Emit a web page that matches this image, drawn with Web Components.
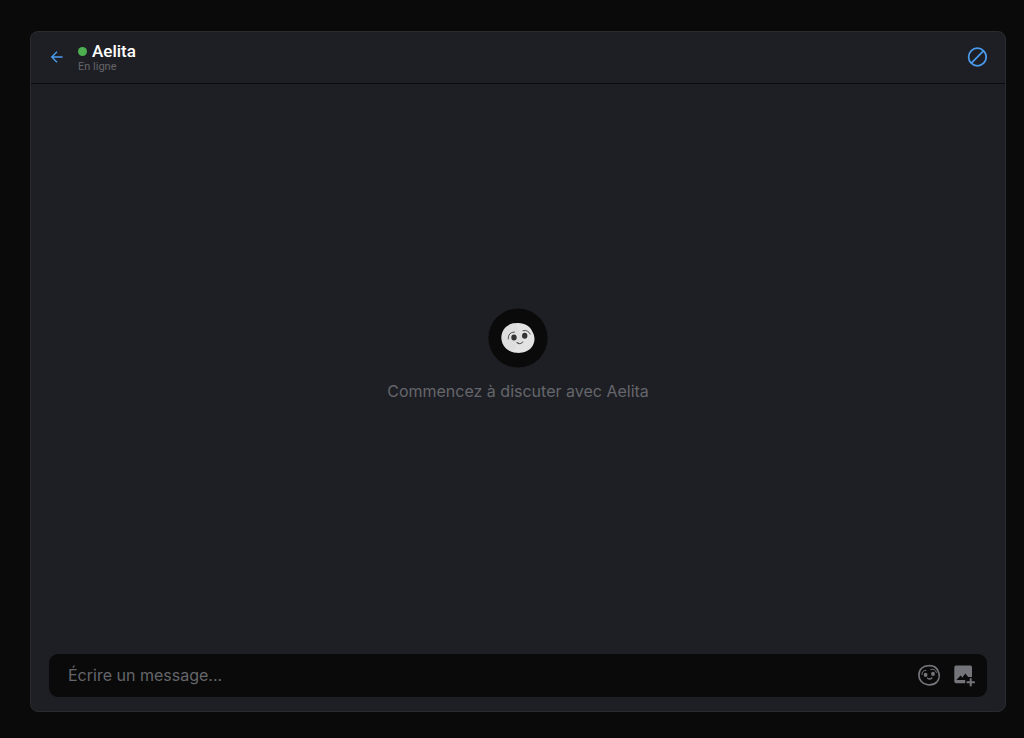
<!DOCTYPE html>
<html lang="fr">
<head>
<meta charset="utf-8">
<title>Aelita</title>
<style>
  html { height: 100%; }
  body { margin: 0; height: 100%; background: #0a0a0a; color: #fff; font-family: Inter, "Liberation Sans", sans-serif; }
</style>
</head>
<body>
<chat-window>
  <chat-header slot="header" status="En ligne">Aelita</chat-header>
  <chat-empty>Commencez à discuter avec Aelita</chat-empty>
  <chat-composer slot="footer"></chat-composer>
</chat-window>
<script>
  function define(name, markup, setup) {
    const template = document.createElement('template');
    template.innerHTML = markup;
    customElements.define(name, class extends HTMLElement {
      constructor() {
        super();
        this.attachShadow({ mode: 'open' }).append(template.content.cloneNode(true));
      }
      connectedCallback() { if (setup) setup(this); }
    });
  }

  define('chat-window', `
    <style>
      :host { display: flex; box-sizing: border-box; min-height: 100%; padding: 31px 18px 26px 30px; }
      section { flex: 1; display: flex; flex-direction: column; min-width: 0; background: #1e1f24; border: 1px solid #2a2b2f; border-radius: 8px; box-sizing: border-box; }
      main { flex: 1; display: grid; place-items: center; padding-bottom: 30px; }
    </style>
    <section>
      <slot name="header"></slot>
      <main><slot></slot></main>
      <slot name="footer"></slot>
    </section>`);

  define('icon-button', `
    <style>
      :host { display: block; flex: none; }
      button { display: block; margin: 0; padding: 0; border: 0; background: none; color: inherit; cursor: pointer; }
    </style>
    <button type="button"><slot></slot></button>`,
    el => el.shadowRoot.querySelector('button').setAttribute('aria-label', el.getAttribute('label')));

  define('chat-header', `
    <style>
      :host { display: flex; align-items: center; box-sizing: border-box; height: 52px; padding: 0 18px 1px; border-bottom: 1px solid #0a0a0a; font-family: Roboto, sans-serif; color: #fff; }
      icon-button { color: #4a9cf0; }
      svg { display: block; }
      .who { flex: 1; padding-left: 13px; }
      h1 { display: flex; align-items: center; gap: 5px; margin: 0; font-size: 17px; line-height: 20px; font-weight: 500; }
      h1::before { content: ""; width: 9px; height: 9px; border-radius: 50%; background: #4caf50; }
      p { margin: 0; font-size: 11px; line-height: 12px; color: #65666b; }
    </style>
    <icon-button label="Retour">
      <svg width="16" height="16" viewBox="0 0 16 16" fill="none" stroke="currentColor" stroke-width="1.4"><path d="M13.6 8H3M8 2.8 2.8 8 8 13.2"/></svg>
    </icon-button>
    <div class="who"><h1><slot></slot></h1><p></p></div>
    <icon-button label="Bloquer">
      <svg width="20" height="20" viewBox="0 0 20 20" fill="none" stroke="currentColor" stroke-width="1.7"><circle cx="10.4" cy="10" r="8.8"/><path d="M4.1 16.3 16.7 3.7"/></svg>
    </icon-button>`,
    el => { el.shadowRoot.querySelector('p').textContent = el.getAttribute('status'); });

  define('chat-empty', `
    <style>
      :host { display: flex; flex-direction: column; align-items: center; gap: 13px; color: #65666b; }
      svg { display: block; }
      p { margin: 0; font-size: 16px; line-height: 20px; }
    </style>
    <svg width="60" height="60" viewBox="0 0 60 60" aria-hidden="true">
      <circle cx="30" cy="30" r="29.6" fill="#0a0a0a"/>
      <path d="M13.5 29C14 20 20.5 15 29.5 15C37 14.8 42.5 18.5 44.5 24C47 28 47.3 33.5 44.5 38C41 43.5 35 45.3 28 44.8C19 44 13.2 37 13.5 29Z" fill="#e3e3e3"/>
      <path d="M13.5 29C14 21 20 16 27 15L35 30L24 43.7C17 41 13.2 36 13.5 29Z" fill="#d9d9d9" opacity=".5"/>
      <g fill="#333"><ellipse cx="26" cy="29.5" rx="2.7" ry="3"/><ellipse cx="36.7" cy="27.8" rx="2.7" ry="3"/></g>
      <g fill="none" stroke="#555" stroke-linecap="round"><path d="M20.2 31Q20 24 26.5 24M35 22.7Q40 21.5 42.2 26"/><path d="M29 34.5Q32 37.2 34.8 34" stroke-width="1.1"/></g>
    </svg>
    <p><slot></slot></p>`);

  define('chat-composer', `
    <style>
      :host { display: block; padding: 0 18px 14px; }
      form { display: flex; align-items: center; box-sizing: border-box; height: 43px; margin: 0; padding: 0 11px 1px 19px; background: #0a0a0a; border-radius: 9px; color: #74747b; }
      input { flex: 1; min-width: 0; height: 24px; margin: 0; padding: 0; border: 0; outline: 0; background: none; color: #fff; font: 16px/24px Inter, sans-serif; }
      input::placeholder { color: #65666b; opacity: 1; }
      .tools { display: flex; align-items: center; gap: 11px; }
      svg { display: block; }
    </style>
    <form>
      <input type="text" aria-label="Message" placeholder="Écrire un message...">
      <div class="tools">
        <icon-button label="Émoticônes">
          <svg width="24" height="24" viewBox="0 0 24 24" fill="none" stroke="currentColor" stroke-linecap="round"><path stroke-width="1.7" d="M1.9 12C2 6 6.2 2.7 12 2.6C16.5 2.4 19.8 4.6 21.2 8.3C22.8 11.5 22.4 16 20 18.8C17.5 21.5 14 22.1 10.5 21.7C5.5 21 1.8 17 1.9 12Z"/><path d="M4.9 11.5Q5 7.4 8.8 7.3M13.8 6.4Q17.8 5.2 19.4 9.4"/><path stroke-width="1.4" d="M10.6 15.3Q12.8 17 14.8 15"/><g fill="currentColor" stroke="none"><ellipse cx="8.6" cy="11.9" rx="1.9" ry="2.1"/><ellipse cx="16" cy="10.9" rx="1.9" ry="2.1"/></g></svg>
        </icon-button>
        <icon-button label="Ajouter une image">
          <svg width="24" height="24" viewBox="0 0 24 24" fill="currentColor"><path fill-rule="evenodd" d="M4 2.5H18.3Q20 2.5 20 4.2V14H16.2V17H13.2V20.2H4Q2.3 20.2 2.3 18.5V4.2Q2.3 2.5 4 2.5ZM4.4 16.9H13.2V17H16.2V14L13.3 10.6L10.4 14.6L8.6 12.4Z"/><path d="M17.7 15.2H19.7V18.2H22.8V20.2H19.7V23.3H17.7V20.2H14.6V18.2H17.7Z"/></svg>
        </icon-button>
      </div>
    </form>`);
</script>
</body>
</html>
